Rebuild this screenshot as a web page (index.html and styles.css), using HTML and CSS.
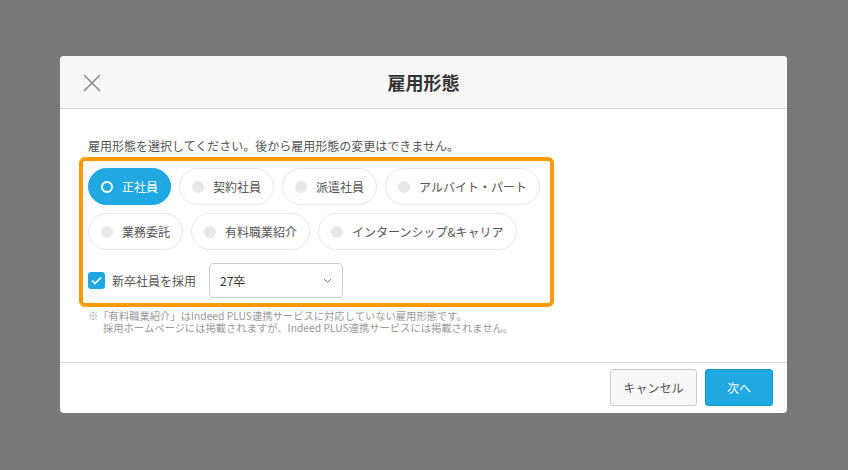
FILE: index.html
```html
<!DOCTYPE html>
<html lang="ja">
<head>
<meta charset="utf-8">
<link rel="stylesheet" href="styles.css">
</head>
<body>
<div class="modal">
  <div class="header">
    <svg class="close" width="18" height="18" viewBox="0 0 18 18"><path d="M1 1L17 17M17 1L1 17" stroke="#8a8a8a" stroke-width="1.5" fill="none"/></svg>
    <div class="title">雇用形態</div>
  </div>
  <div class="body">
    <p class="lead">雇用形態を選択してください。後から雇用形態の変更はできません。</p>
    <div class="highlight">
      <div class="pills">
        <div class="pill selected"><span class="ring"></span>正社員</div>
        <div class="pill"><span class="dot"></span>契約社員</div>
        <div class="pill"><span class="dot"></span>派遣社員</div>
        <div class="pill"><span class="dot"></span>アルバイト・パート</div>
        <div class="pill"><span class="dot"></span>業務委託</div>
        <div class="pill"><span class="dot"></span>有料職業紹介</div>
        <div class="pill"><span class="dot"></span>インターンシップ&amp;キャリア</div>
      </div>
      <div class="grad-row">
        <span class="check"><svg width="11" height="9" viewBox="0 0 11 9"><path d="M1 4.5L4 7.5L10 1.5" stroke="#fff" stroke-width="1.6" fill="none"/></svg></span>
        <span class="check-label">新卒社員を採用</span>
        <div class="select">
          <span>27卒</span>
          <svg width="9" height="6" viewBox="0 0 9 6"><path d="M1 1L4.5 4.5L8 1" stroke="#777" stroke-width="1" fill="none"/></svg>
        </div>
      </div>
    </div>
    <p class="note">※「有料職業紹介」はIndeed PLUS連携サービスに対応していない雇用形態です。<br>採用ホームページには掲載されますが、Indeed PLUS連携サービスには掲載されません。</p>
  </div>
  <div class="footer">
    <button class="btn cancel">キャンセル</button>
    <button class="btn next">次へ</button>
  </div>
</div>
</body>
</html>
```

FILE: styles.css
```css
* { box-sizing: border-box; }
html, body { margin: 0; padding: 0; }
body {
  background: #787878;
  width: 848px;
  height: 470px;
  padding: 56px 0 0 60px;
  font-family: "Noto Sans CJK JP", "Noto Sans", sans-serif;
}
.modal {
  width: 727px;
  height: 357px;
  background: #fff;
  border-radius: 4px;
  display: flex;
  flex-direction: column;
  overflow: hidden;
}
.header {
  height: 53px;
  flex: none;
  background: #f7f7f7;
  border-bottom: 1px solid #d9d9d9;
  position: relative;
  display: flex;
  align-items: center;
  justify-content: center;
}
.close {
  position: absolute;
  left: 23px;
  top: 18px;
}
.title {
  font-size: 18px;
  font-weight: bold;
  color: #333;
}
.body {
  flex: 1;
  padding: 28px 28px 0;
}
.lead {
  margin: 0;
  font-size: 12px;
  line-height: 18px;
  color: #555;
}
.highlight {
  margin: 2px 0 0 -9px;
  width: 475px;
  border: 4px solid #ff9900;
  border-radius: 6px;
  padding: 7px 0 5px 5px;
}
.pills {
  display: flex;
  flex-wrap: wrap;
  gap: 8px 8px;
}
.pill {
  height: 37px;
  display: flex;
  align-items: center;
  gap: 9px;
  padding: 0 12px 0 12px;
  border: 1.5px solid #e6e6e6;
  border-radius: 19px;
  font-size: 12px;
  color: #555;
  background: #fff;
}
.pill.selected {
  background: #1fa8e1;
  border-color: #1fa8e1;
  color: #fff;
}
.ring {
  width: 12px;
  height: 12px;
  border: 2px solid #fff;
  border-radius: 50%;
}
.dot {
  width: 12px;
  height: 12px;
  border-radius: 50%;
  background: #e8e8e8;
}
.grad-row {
  display: flex;
  align-items: center;
  margin-top: 13px;
}
.check {
  width: 17px;
  height: 17px;
  border-radius: 3px;
  background: #1fa8e1;
  display: flex;
  align-items: center;
  justify-content: center;
}
.check-label {
  font-size: 12px;
  color: #555;
  margin-left: 7px;
}
.select {
  margin-left: 13px;
  width: 134px;
  height: 35px;
  border: 1px solid #cfcfcf;
  border-radius: 4px;
  display: flex;
  align-items: center;
  justify-content: space-between;
  padding: 0 10px;
  font-size: 12px;
  color: #333;
}
.note {
  margin: 3px 0 0;
  font-size: 10.3px;
  line-height: 12px;
  color: #999;
  padding-left: 15px;
  text-indent: -15px;
}
.footer {
  height: 51px;
  flex: none;
  border-top: 1px solid #d9d9d9;
  display: flex;
  align-items: center;
  justify-content: flex-end;
  gap: 8px;
  padding: 0 14px 1px 0;
}
.btn {
  height: 37px;
  border-radius: 3px;
  font-family: inherit;
  font-size: 12px;
  padding: 0;
}
.cancel {
  width: 87px;
  background: #f8f8f8;
  border: 1px solid #cccccc;
  color: #555;
}
.next {
  width: 68px;
  background: #1fa8e1;
  border: 1px solid #1a92c6;
  color: #fff;
}
```
